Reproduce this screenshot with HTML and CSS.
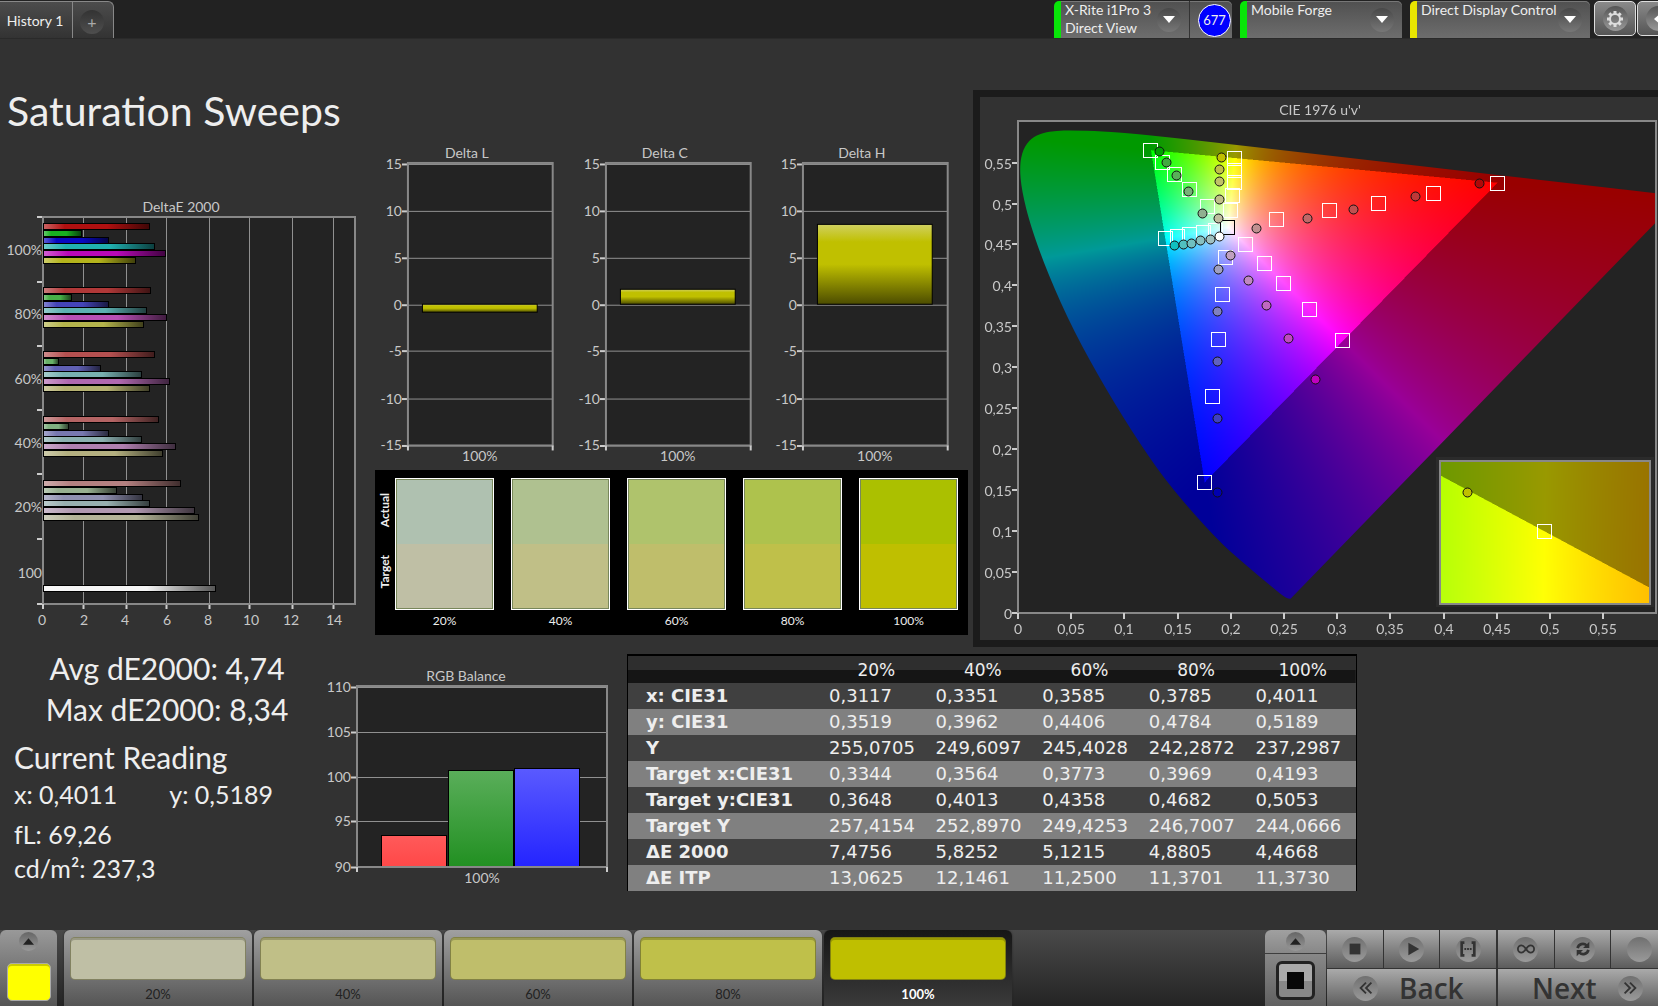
FILE: index.html
```html
<!DOCTYPE html>
<html lang="en">
<head>
<meta charset="utf-8">
<meta name="viewport" content="width=device-width, initial-scale=1">
<title>Saturation Sweeps</title>
<link rel="stylesheet" href="styles.css">
</head>
<body>
<header class="topbar">
  <nav class="tabs">
    <button class="tab" type="button">History 1</button>
    <button class="tab tab-add" type="button" aria-label="Add history"><span class="tab-plus">+</span></button>
  </nav>
  <div class="devices">
    <div class="device device-meter">
      <button class="device-main" type="button">
        <span class="device-name">X-Rite i1Pro 3<br>Direct View</span>
        <span class="knob"><svg viewBox="0 0 12 8"><path d="M0 0h12L6 7z"/></svg></span>
      </button>
      <div class="device-badge-cell"><span class="device-badge">677</span></div>
    </div>
    <div class="device device-source">
      <button class="device-main" type="button">
        <span class="device-name">Mobile Forge</span>
        <span class="knob"><svg viewBox="0 0 12 8"><path d="M0 0h12L6 7z"/></svg></span>
      </button>
    </div>
    <div class="device device-display">
      <button class="device-main" type="button">
        <span class="device-name">Direct Display Control</span>
        <span class="knob"><svg viewBox="0 0 12 8"><path d="M0 0h12L6 7z"/></svg></span>
      </button>
    </div>
    <button class="tool" type="button" aria-label="Settings">
      <span class="tool-disc"><svg viewBox="0 0 20 20"><circle cx="10" cy="10" r="5" fill="none" stroke="#ddd" stroke-width="2"/><g stroke="#ddd" stroke-width="3"><path d="M10 2v3M10 15v3M2 10h3M15 10h3M4.300 4.300l2.200 2.200M13.500 13.500l2.200 2.200M15.700 4.300l-2.200 2.200M6.500 13.500l-2.200 2.200"/></g></svg></span>
    </button>
    <button class="tool" type="button" aria-label="Collapse">
      <span class="tool-disc"><svg viewBox="0 0 20 20"><path d="M13 4v12L6 10z" fill="#fff"/></svg></span>
    </button>
  </div>
</header>

<main>
  <section class="upper">
    <div class="col-left">
      <h1>Saturation Sweeps</h1>
      <svg class="chart" id="deltaE" viewBox="0 195 375 440"></svg>
    </div>
    <div class="col-mid">
      <div class="deltas">
        <svg class="chart" id="deltaL" viewBox="0 140 198 331"></svg>
        <svg class="chart" id="deltaC" viewBox="0 140 198 331"></svg>
        <svg class="chart" id="deltaH" viewBox="0 140 198 331"></svg>
      </div>
      <div class="swatches">
        <div class="swatch-side"><span>Actual</span><span>Target</span></div>
        <div class="swatch-list">
          <figure><div class="pair"><i style="background:#afc1b0"></i><i style="background:#bfbfa5"></i></div><figcaption>20%</figcaption></figure>
          <figure><div class="pair"><i style="background:#afc190"></i><i style="background:#c0bf87"></i></div><figcaption>40%</figcaption></figure>
          <figure><div class="pair"><i style="background:#afc36c"></i><i style="background:#bfbe6b"></i></div><figcaption>60%</figcaption></figure>
          <figure><div class="pair"><i style="background:#aec24d"></i><i style="background:#bfc04a"></i></div><figcaption>80%</figcaption></figure>
          <figure><div class="pair"><i style="background:#abc000"></i><i style="background:#bfbf00"></i></div><figcaption>100%</figcaption></figure>
        </div>
      </div>
    </div>
    <div class="cie">
      <canvas id="cieField" width="1356" height="1086"></canvas>
      <svg class="chart" id="cieMarks" viewBox="980 97 678 543"></svg>
    </div>
  </section>

  <section class="lower">
    <div class="readings">
      <p class="stat">Avg dE2000: 4,74</p>
      <p class="stat">Max dE2000: 8,34</p>
      <h2>Current Reading</h2>
      <p class="value xy"><span>x: 0,4011</span><span>y: 0,5189</span></p>
      <p class="value">fL: 69,26</p>
      <p class="value">cd/m²: 237,3</p>
    </div>
    <svg class="chart" id="rgb" viewBox="325 665 302 230"></svg>
    <table>
      <colgroup><col class="c-label"><col><col><col><col><col></colgroup>
      <thead><tr><td></td><th scope="col">20%</th><th scope="col">40%</th><th scope="col">60%</th><th scope="col">80%</th><th scope="col">100%</th></tr></thead>
      <tbody>
        <tr><th scope="row">x: CIE31</th><td>0,3117</td><td>0,3351</td><td>0,3585</td><td>0,3785</td><td>0,4011</td></tr>
        <tr><th scope="row">y: CIE31</th><td>0,3519</td><td>0,3962</td><td>0,4406</td><td>0,4784</td><td>0,5189</td></tr>
        <tr><th scope="row">Y</th><td>255,0705</td><td>249,6097</td><td>245,4028</td><td>242,2872</td><td>237,2987</td></tr>
        <tr><th scope="row">Target x:CIE31</th><td>0,3344</td><td>0,3564</td><td>0,3773</td><td>0,3969</td><td>0,4193</td></tr>
        <tr><th scope="row">Target y:CIE31</th><td>0,3648</td><td>0,4013</td><td>0,4358</td><td>0,4682</td><td>0,5053</td></tr>
        <tr><th scope="row">Target Y</th><td>257,4154</td><td>252,8970</td><td>249,4253</td><td>246,7007</td><td>244,0666</td></tr>
        <tr><th scope="row">ΔE 2000</th><td>7,4756</td><td>5,8252</td><td>5,1215</td><td>4,8805</td><td>4,4668</td></tr>
        <tr><th scope="row">ΔE ITP</th><td>13,0625</td><td>12,1461</td><td>11,2500</td><td>11,3701</td><td>11,3730</td></tr>
      </tbody>
    </table>
  </section>
</main>

<footer class="bottombar">
  <button class="current" type="button" aria-label="Pattern colour">
    <span class="up-disc"><svg viewBox="0 0 10 8"><path d="M0 7h10L5 1z"/></svg></span>
    <span class="current-color"></span>
  </button>
  <div class="steps">
    <button class="step" type="button"><span class="step-color" style="background:#bfbfa5"></span>20%</button>
    <button class="step" type="button"><span class="step-color" style="background:#c0bf87"></span>40%</button>
    <button class="step" type="button"><span class="step-color" style="background:#bfbe6b"></span>60%</button>
    <button class="step" type="button"><span class="step-color" style="background:#bfc04a"></span>80%</button>
    <button class="step step-on" type="button"><span class="step-color" style="background:#bfbf00"></span>100%</button>
  </div>
  <div class="transport">
    <div class="mode">
      <button class="mode-up" type="button" aria-label="More modes"><span class="up-disc"><svg viewBox="0 0 10 8"><path d="M0 7h10L5 1z"/></svg></span></button>
      <button class="mode-now" type="button" aria-label="Window pattern"><span class="mode-frame"><i></i></span></button>
    </div>
    <div class="keys">
      <div class="keys-row">
        <button class="key" type="button" aria-label="Stop"><span class="disc"><svg viewBox="0 0 20 20"><path d="M4 4h12v12H4z" fill="#333"/></svg></span></button>
        <button class="key" type="button" aria-label="Play"><span class="disc"><svg viewBox="0 0 20 20"><path d="M6 3v14l12-7z" fill="#333"/></svg></span></button>
        <button class="key key-group-end" type="button" aria-label="Range"><span class="disc"><svg viewBox="0 0 20 20" fill="none" stroke="#333" stroke-width="3"><path d="M6 3H3v14h3M14 3h3v14h-3"/><path d="M6 10h8" stroke-width="2" stroke-dasharray="2 1"/></svg></span></button>
        <button class="key" type="button" aria-label="Continuous"><span class="disc"><svg viewBox="0 0 20 20" fill="none" stroke="#333" stroke-width="2"><path d="M10 10C8 7 6.500 6 5 6a4 4 0 0 0 0 8C6.500 14 8 13 10 10s3.500-4 5-4a4 4 0 0 1 0 8C13.500 14 12 13 10 10z"/></svg></span></button>
        <button class="key" type="button" aria-label="Repeat"><span class="disc"><svg viewBox="0 0 20 20"><path d="M4 9a6 6 0 0 1 10-3M16 11a6 6 0 0 1-10 3" fill="none" stroke="#333" stroke-width="3"/><path d="M17 2v7h-7zM3 18v-7h7z" fill="#333"/></svg></span></button>
        <button class="key" type="button" aria-label="Option"><span class="disc"></span></button>
      </div>
      <div class="keys-row">
        <button class="key key-wide key-group-end" type="button"><span class="disc"><svg viewBox="0 0 20 20" fill="none" stroke="#333" stroke-width="2"><path d="M10 4l-6 6 6 6M16 4l-6 6 6 6"/></svg></span>Back</button>
        <button class="key key-wide key-next" type="button">Next<span class="disc"><svg viewBox="0 0 20 20" fill="none" stroke="#333" stroke-width="2"><path d="M4 4l6 6-6 6M10 4l6 6-6 6"/></svg></span></button>
      </div>
    </div>
  </div>
</footer>
<script src="charts.js"></script>
</body>
</html>
```
FILE: styles.css
```css
* { box-sizing: border-box; }

body {
  margin: 0;
  min-height: 100vh;
  display: flex;
  flex-direction: column;
  overflow-x: hidden;
  background: #323232;
  color: #eee;
  font-family: Lato, "Open Sans", sans-serif;
}

button {
  margin: 0;
  padding: 0;
  border: 0;
  background: none;
  color: inherit;
  font: inherit;
}

h1, h2, p, figure { margin: 0; font-weight: 400; }

/* top bar */
.topbar {
  display: flex;
  justify-content: space-between;
  height: 39px;
  padding-top: 1px;
  background: #222;
  border-bottom: 1px solid #2a2a2a;
  overflow: hidden;
}

.tabs {
  display: flex;
  border: 1px solid #888;
  border-width: 1px 1px 0 0;
  border-radius: 0 6px 0 0;
  background: linear-gradient(#4c4c4c, #333);
}

.tab { width: 72px; padding-right: 2px; font-size: 14px; text-align: center; }
.tab-add { width: 41px; border-left: 1px solid #888; }

.tab-plus {
  display: block;
  width: 24px;
  margin: 4px auto 0;
  border-radius: 50%;
  background: linear-gradient(#333, #4e4e4e);
  color: #aaa;
  font-size: 16px;
  line-height: 24px;
}

.devices { display: flex; flex: none; margin-right: -22px; }

.device {
  display: flex;
  height: 38px;
  margin-right: 8px;
  border-radius: 5px 5px 0 0;
  border-left: 7px solid #08e508;
  background: linear-gradient(#505050, #6e6e6e);
  box-shadow: inset 0 1px #777;
}

.device-meter { width: 178px; }
.device-source { width: 162px; }
.device-display { width: 180px; border-left-color: #e8e500; margin-right: 4px; }

.device-main {
  display: flex;
  flex: 1;
  justify-content: space-between;
  padding: 0 8px 0 4px;
  text-align: left;
  font-size: 14px;
  line-height: 18px;
  white-space: nowrap;
}

.knob {
  display: flex;
  align-items: center;
  justify-content: center;
  width: 24px;
  height: 24px;
  margin-top: 7px;
  border-radius: 50%;
  background: linear-gradient(#484848, #777);
}

.knob svg { width: 12px; height: 8px; fill: #fff; }

.device-badge-cell {
  display: flex;
  align-items: center;
  justify-content: flex-end;
  width: 43px;
  padding-right: 1px;
  border-left: 1px solid #333;
}

.device-badge {
  width: 33px;
  border: 1px solid #fff;
  border-radius: 50%;
  background: #00f;
  font-size: 13px;
  line-height: 31px;
  text-align: center;
}

.tool {
  display: flex;
  align-items: center;
  justify-content: center;
  width: 42px;
  height: 35px;
  margin-right: 1px;
  border: 1px solid #ddd;
  border-radius: 5px;
  background: linear-gradient(#8a8a8a, #555);
}

.tool-disc {
  display: flex;
  align-items: center;
  justify-content: center;
  width: 25px;
  height: 25px;
  border-radius: 50%;
  background: linear-gradient(#555, #999);
}

.tool-disc svg { width: 20px; height: 20px; }

/* upper area */
main { flex: 1; }

.upper {
  display: grid;
  grid-template-columns: 375fr 593fr 690fr;
  align-items: start;
}

.chart { display: block; width: 100%; height: auto; }

h1 {
  padding: 48px 0 60px 7px;
  font-size: 41px;
  line-height: 48px;
}

.col-mid { padding-top: 101px; }
.deltas { display: grid; grid-template-columns: repeat(3, 1fr); }

.swatches {
  display: flex;
  padding: 8px 10px 6px 0;
  background: #000;
}

.swatch-side {
  display: flex;
  flex-direction: column;
  justify-content: space-around;
  align-items: center;
  flex: none;
  width: 20px;
  height: 132px;
  padding-bottom: 8px;
  font-size: 12px;
  font-weight: 700;
  line-height: 16px;
}

.swatch-side span { writing-mode: vertical-rl; transform: rotate(180deg); }

.swatch-list {
  display: grid;
  grid-template-columns: repeat(5, 1fr);
  flex: 1;
  gap: 17px;
}

.pair {
  display: flex;
  flex-direction: column;
  height: 132px;
  border: 1px solid #fff;
  outline: 1px solid #78875a;
  outline-offset: -2px;
}

.pair i { flex: 1; }
figcaption { font-size: 12px; line-height: 17px; padding-top: 2px; text-align: center; }

.cie {
  display: grid;
  margin: 51px 0 0 5px;
  border: 7px solid #1b1b1b;
  border-right: 0;
}

.cie canvas, .cie svg { grid-area: 1 / 1; width: 100%; height: auto; }

/* svg chart parts */
.chart text { fill: #c8c8c8; font-size: 14px; }
.plot { fill: #232323; }
.frame { fill: none; stroke: #888; stroke-width: 2; }
.tick { stroke: #ccc; stroke-width: 2; }
.bar { stroke: #000; stroke-width: 1; }
.target { fill: none; stroke: #fff; stroke-width: 1; }
.white-point { fill: none; stroke: #000; stroke-width: 1; }
.reading { stroke: #111; stroke-width: 1; }

/* lower area */
.lower {
  display: grid;
  grid-template-columns: 325fr 302fr 730fr 301fr;
  align-items: start;
  padding-top: 7px;
}

.lower > .chart { margin-top: 10px; }
.readings { padding-left: 14px; }
.stat { width: 306px; text-align: center; font-size: 30px; line-height: 41px; }
.stat:first-child { margin-top: -6px; }
.readings h2 { margin-top: 7px; font-size: 30px; line-height: 40px; }
.value { font-size: 25px; line-height: 34px; }
.xy { display: flex; gap: 52px; margin-bottom: 6px; }

table {
  width: 100%;
  table-layout: fixed;
  border-collapse: separate;
  border-spacing: 0;
  border: 1px solid #000;
  border-width: 2px 1px 0;
  font-family: "DejaVu Sans", sans-serif;
  font-size: 18px;
}

.c-label { width: 195px; }
thead tr { height: 27px; background: linear-gradient(#2e2e2e 50%, #151515 50%); }
td, th { padding: 0 0 0 6px; line-height: 24px; }
thead th { padding: 0; font-size: 17px; font-weight: 400; }
tbody tr { height: 26px; background: #404040; }
tbody tr:nth-child(even) { background: #808080; }
tbody th { padding-left: 18px; text-align: left; white-space: nowrap; }

/* bottom bar */
.bottombar {
  display: flex;
  height: 76px;
  background: linear-gradient(#4a4a4a, #242424);
  overflow: hidden;
}

.current {
  display: flex;
  flex-direction: column;
  align-items: center;
  flex: none;
  width: 57px;
  padding-top: 2px;
  border-radius: 6px 6px 0 0;
  background: linear-gradient(#999, #555);
}

.up-disc {
  display: flex;
  align-items: center;
  justify-content: center;
  width: 19px;
  height: 19px;
  border-radius: 50%;
  background: linear-gradient(#666, #999);
}

.up-disc svg { width: 11px; height: 9px; fill: #222; }

.current-color {
  width: 44px;
  height: 38px;
  margin-top: 12px;
  border: 1px solid #aaa;
  border-radius: 5px;
  background: #ff0;
  box-shadow: inset 0 2px #cc0;
}

.steps { display: flex; flex: none; gap: 2px; padding-left: 7px; }

.step {
  display: flex;
  flex-direction: column;
  align-items: center;
  width: 188px;
  padding-top: 7px;
  border-radius: 6px 6px 0 0;
  background: linear-gradient(#a0a0a0, #555);
  box-shadow: 0 0 2px #222;
  color: #222;
  font-size: 13px;
  line-height: 24px;
}

.step-color {
  width: 176px;
  height: 45px;
  margin-bottom: 2px;
  border: 1px solid rgba(70, 70, 30, .5);
  border-radius: 5px;
  box-shadow: inset 0 2px rgba(0, 0, 0, .2);
}

.step-on { background: linear-gradient(#161616, #3a3a3a); color: #fff; font-weight: 700; }

.transport { display: flex; flex: none; margin-left: auto; }

.mode { display: flex; flex-direction: column; width: 61px; margin-right: 1px; }

.mode-up {
  display: flex;
  justify-content: center;
  height: 23px;
  padding-top: 2px;
  border-radius: 6px 6px 0 0;
  background: linear-gradient(#a0a0a0, #888);
}

.mode-now {
  display: flex;
  align-items: center;
  justify-content: center;
  flex: 1;
  margin-top: 1px;
  background: linear-gradient(#888, #606060);
}

.mode-frame {
  display: flex;
  align-items: center;
  justify-content: center;
  width: 39px;
  height: 39px;
  border: 3px solid #222;
  border-radius: 6px;
  background: linear-gradient(#aaa 50%, #888 50%);
}

.mode-frame i { width: 17px; height: 17px; background: #080808; }

.keys { display: flex; flex-direction: column; gap: 1px; width: 331px; overflow: hidden; background: #333; }
.keys-row { display: flex; gap: 1px; flex: none; width: 340px; height: 38px; }

.key {
  display: flex;
  align-items: center;
  justify-content: center;
  flex: 1;
  background: linear-gradient(#aaa, #5c5c5c);
  color: #333;
}

.key-group-end { margin-right: 1px; }

.disc {
  display: flex;
  align-items: center;
  justify-content: center;
  flex: none;
  width: 25px;
  height: 25px;
  border-radius: 50%;
  background: linear-gradient(#707070, #9a9a9a);
}

.disc svg { width: 18px; height: 18px; }

.key-wide {
  flex: none;
  width: 169px;
  justify-content: flex-start;
  gap: 21px;
  padding-left: 26px;
  font: 600 28px/38px "Open Sans", sans-serif;
}

.key-next { padding-left: 34px; }
```
FILE: charts.js
```js
const NS = 'http://www.w3.org/2000/svg';

function add(parent, tag, attrs, text) {
  const el = document.createElementNS(NS, tag);
  for (const k in attrs) el.setAttribute(k, attrs[k]);
  if (text !== undefined) el.textContent = text;
  parent.appendChild(el);
  return el;
}
const line = (p, cls, x1, y1, x2, y2) => add(p, 'line', { class: cls, x1, y1, x2, y2 });
const label = (p, anchor, x, y, t) => add(p, 'text', { 'text-anchor': anchor, x, y }, t);

let gradientCount = 0;
function gradient(svg, horizontal, stops) {
  const id = 'g' + (++gradientCount);
  const g = add(svg, 'linearGradient', { id, x1: 0, y1: 0, x2: horizontal ? 1 : 0, y2: horizontal ? 0 : 1 });
  stops.forEach(([offset, color]) => add(g, 'stop', { offset, 'stop-color': color }));
  return `url(#${id})`;
}
function mix(hex, other, t) {
  const a = parseInt(hex.slice(1), 16);
  return 'rgb(' + [16, 8, 0].map(s => Math.round(((a >> s) & 255) * (1 - t) + other * t)).join() + ')';
}

/* DeltaE 2000 */
(function () {
  const s = document.getElementById('deltaE');
  label(s, 'middle', 181, 212, 'DeltaE 2000');
  add(s, 'rect', { class: 'plot', x: 43, y: 217, width: 312, height: 387 });
  [83, 126, 166, 209, 249, 292, 333].forEach(x => {
    add(s, 'rect', { x, y: 217, width: 1, height: 387, fill: '#909090' });
    line(s, 'tick', x + .5, 604, x + .5, 609);
  });
  add(s, 'rect', { class: 'frame', x: 43, y: 217, width: 312, height: 387 });
  line(s, 'tick', 43, 604, 43, 609);
  [217, 282, 346, 410, 474, 539, 604].forEach(y => line(s, 'tick', 37, y, 42, y));
  const groups = [
    [226, ['#b01010', '#18b020', '#0808c0', '#20b0b0', '#b808b8', '#b4b41c'], [150, 82, 109, 155, 166, 136]],
    [290, ['#b03838', '#48b048', '#4444b8', '#5cb0b0', '#b850b4', '#b4b44c'], [151, 72, 109, 147, 167, 144]],
    [354, ['#b45050', '#68b068', '#6060b4', '#78b0b0', '#b068b0', '#b4b070'], [155, 59, 101, 142, 170, 150]],
    [419, ['#b46464', '#80b080', '#7878b0', '#8cb0b0', '#b080b0', '#b4b080'], [159, 69, 109, 142, 176, 163]],
    [483, ['#b48080', '#98b090', '#9090b0', '#98b0b0', '#b098b0', '#b4b498'], [181, 117, 143, 150, 195, 199]]
  ];
  const bar = (y, color, end) => add(s, 'rect', {
    class: 'bar', x: 43.5, y: y - 2.5, width: end - 44, height: 6,
    fill: gradient(s, true, [[0, mix(color, 255, .35)], [.2, color], [.6, color], [1, mix(color, 0, .65)]])
  });
  groups.forEach(([y, colors, ends]) => colors.forEach((c, i) => bar(y + Math.round(i * 6.8), c, ends[i])));
  bar(588, '#f4f4f4', 216);
  ['100%', '80%', '60%', '40%', '20%', '100'].forEach((t, i) => label(s, 'end', 42, [255, 319, 384, 448, 512, 578][i], t));
  [42, 84, 125, 167, 208, 251, 291, 334].forEach((x, i) => label(s, 'middle', x, 625, i * 2));
})();

/* Delta L / C / H */
function deltaChart(id, title, top, bottom) {
  const s = document.getElementById(id);
  label(s, 'middle', 92, 158, title);
  add(s, 'rect', { class: 'plot', x: 33, y: 163, width: 145, height: 283 });
  [164, 211, 258, 305, 351, 399, 446].forEach((y, i) => {
    add(s, 'rect', { x: 33, y, width: 145, height: 1, fill: '#909090' });
    line(s, 'tick', 27, y + .5, 32, y + .5);
    label(s, 'end', 27, y + 5, 15 - i * 5);
  });
  add(s, 'rect', { class: 'frame', x: 33, y: 163, width: 145, height: 283 });
  [33, 178].forEach(x => line(s, 'tick', x, 446, x, 451));
  add(s, 'rect', {
    class: 'bar', x: 47.5, y: top + .5, width: 115, height: bottom - top,
    fill: gradient(s, false, [[0, '#d0d060'], [.22, '#c0c000'], [.5, '#c0c000'], [1, '#4c4c00']])
  });
  label(s, 'middle', 105, 462, '100%');
}
deltaChart('deltaL', 'Delta L', 304, 312);
deltaChart('deltaC', 'Delta C', 289, 304);
deltaChart('deltaH', 'Delta H', 224, 304);

/* RGB balance */
(function () {
  const s = document.getElementById('rgb');
  label(s, 'middle', 466, 682, 'RGB Balance');
  add(s, 'rect', { class: 'plot', x: 357, y: 687, width: 250, height: 181 });
  [688, 733, 778, 822, 868].forEach((y, i) => {
    add(s, 'rect', { x: 357, y, width: 250, height: 1, fill: '#909090' });
    line(s, 'tick', 351, y + .5, 356, y + .5);
    label(s, 'end', 351, y + 5, 110 - i * 5);
  });
  const bars = [[381, 836, '#ff5a5a', '#ff4848'], [448, 771, '#5aae5a', '#229022'], [514, 769, '#5a5aff', '#2424ff']];
  bars.forEach(([x, y, a, b]) => add(s, 'rect', {
    class: 'bar', x: x + .5, y: y + .5, width: 65, height: 867 - y, fill: gradient(s, false, [[0, a], [1, b]])
  }));
  add(s, 'rect', { class: 'frame', x: 357, y: 687, width: 250, height: 181 });
  [357, 607].forEach(x => line(s, 'tick', x, 868, x, 873));
  label(s, 'middle', 482, 884, '100%');
})();

/* CIE 1976 colour field */
const U0 = 1018, V0 = 612, SU = 1064, SV = 821;
function paintField(x0, y0, w, h, toUV, scale) {
  const layer = document.createElement('canvas');
  const W = layer.width = Math.round(w * scale), H = layer.height = Math.round(h * scale);
  const ctx = layer.getContext('2d');
  const img = ctx.createImageData(W, H);
  for (let j = 0; j < H; j++) {
    for (let i = 0; i < W; i++) {
      const [u, v] = toUV(x0 + (i + .5) / scale, y0 + (j + .5) / scale);
      if (v <= 0.002) continue;
      const X = 9 * u / (4 * v), Z = (12 - 3 * u - 20 * v) / (4 * v);
      const lin = [
        3.2406 * X - 1.5372 - 0.4986 * Z,
        -0.9689 * X + 1.8758 + 0.0415 * Z,
        0.0557 * X - 0.2040 + 1.0570 * Z
      ];
      const level = Math.min(...lin) >= 0 ? 255 : 153;
      const max = Math.max(...lin), k = (j * W + i) * 4;
      for (let c = 0; c < 3; c++) img.data[k + c] = Math.max(0, lin[c]) / max * level;
      img.data[k + 3] = 255;
    }
  }
  ctx.putImageData(img, 0, 0);
  return layer;
}
(function () {
  const locus = [[.1741, .0050], [.1733, .0048], [.1714, .0051], [.1689, .0069], [.1644, .0109], [.1566, .0177],
    [.1440, .0297], [.1241, .0578], [.1096, .0868], [.0913, .1327], [.0687, .2007], [.0454, .2950], [.0235, .4127],
    [.0082, .5384], [.0039, .6548], [.0139, .7502], [.0389, .8120], [.0743, .8338], [.1142, .8262], [.1547, .8059],
    [.2296, .7543], [.3016, .6923], [.3731, .6245], [.4441, .5547], [.5125, .4866], [.5752, .4242], [.6270, .3725],
    [.6658, .3340], [.6915, .3083], [.7190, .2809], [.7347, .2653]];
  const ctx = document.getElementById('cieField').getContext('2d');
  ctx.scale(2, 2);
  ctx.translate(-980, -97);
  ctx.fillStyle = '#232323';
  ctx.fillRect(1018, 121, 639, 492);

  const main = paintField(1018, 121, 639, 492, (x, y) => [(x - U0) / SU, (V0 - y) / SV], 2);
  ctx.save();
  ctx.beginPath();
  ctx.rect(1018, 121, 639, 492);
  ctx.clip();
  const pts = locus.map(([x, y]) => {
    const d = -2 * x + 12 * y + 3;
    return [U0 + SU * 4 * x / d, V0 - SV * 9 * y / d];
  });
  const n = pts.length;
  const mid = (a, b) => [(a[0] + b[0]) / 2, (a[1] + b[1]) / 2];
  ctx.beginPath();
  ctx.moveTo(...pts[n - 1]);
  ctx.lineTo(...mid(pts[0], pts[1]));
  for (let i = 1; i < n - 1; i++) ctx.quadraticCurveTo(...pts[i], ...mid(pts[i], pts[i + 1]));
  ctx.lineTo(...pts[n - 1]);
  ctx.closePath();
  ctx.clip();
  ctx.drawImage(main, 1018, 121, 639, 492);
  ctx.restore();

  ctx.fillStyle = '#2b2b2b';
  ctx.fillRect(1436, 457, 218, 150);
  const inset = paintField(1440, 461, 210, 143,
    (x, y) => [.2039 + (x - 1544.5) / 5700, .5529 - (y - 531.5) / 25140], 2);
  ctx.drawImage(inset, 1440, 461, 210, 143);
})();

/* CIE axes and markers */
(function () {
  const s = document.getElementById('cieMarks');
  label(s, 'middle', 1320, 115, "CIE 1976 u'v'");
  add(s, 'rect', { class: 'frame', x: 1018, y: 121, width: 638, height: 492 });
  add(s, 'rect', { class: 'frame', x: 1440, y: 461, width: 210, height: 143 });
  for (let i = 0; i < 12; i++) {
    const t = String(i * 5 / 100).replace('.', ',');
    const x = Math.round(U0 + SU * i * .05), y = Math.round(612.5 - 818 * i * .05);
    line(s, 'tick', x, 613, x, 619);
    line(s, 'tick', 1012, y, 1017, y);
    label(s, 'middle', x, 634, t);
    label(s, 'end', 1012, y + 6, t);
  }
  const square = (x, y, cls) => add(s, 'rect', { class: cls, x: x - 6.5, y: y - 6.5, width: 14, height: 14 });
  [[1150, 150], [1162, 162], [1174, 174], [1189, 189], [1207, 206],
   [1234, 158], [1234, 170], [1234, 182], [1232, 195], [1230, 210],
   [1165, 238], [1177, 236], [1189, 234], [1203, 232], [1215, 230],
   [1245, 244], [1264, 263], [1283, 283], [1309, 309], [1342, 340],
   [1225, 257], [1222, 294], [1218, 339], [1212, 396], [1204, 482],
   [1276, 219], [1329, 210], [1378, 203], [1433, 193], [1497, 183], [1544, 531]
  ].forEach(([x, y]) => square(x, y, 'target'));
  square(1227, 227, 'white-point');
  [[1159, 151, '#00a000'], [1166, 162, '#40a840'], [1176, 175, '#58b058'], [1188, 191, '#78b078'], [1202, 213, '#90b090'],
   [1221, 157, '#c0c000'], [1219, 169, '#c0c048'], [1219, 181, '#c0c068'], [1219, 199, '#c0c088'], [1218, 218, '#c0c0a0'],
   [1174, 245, '#10c0c0'], [1183, 244, '#50c0c0'], [1191, 243, '#70c0c0'], [1200, 240, '#88c0c0'], [1210, 239, '#a0c0c0'],
   [1230, 255, '#c0a0c0'], [1248, 280, '#c088c0'], [1266, 305, '#c068c0'], [1288, 338, '#c048c0'], [1315, 379, '#c000c0'],
   [1218, 269, '#a0a0c0'], [1217, 311, '#8080c0'], [1217, 361, '#6060c0'], [1217, 418, '#4040c0'], [1217, 492, '#0000b0'],
   [1256, 228, '#c09090'], [1307, 218, '#c06868'], [1353, 209, '#c05050'], [1415, 196, '#c03838'], [1479, 183, '#b00808'],
   [1219, 236, '#ffffff'], [1467, 492, '#c0c000']
  ].forEach(([x, y, c]) => add(s, 'circle', { class: 'reading', cx: x + .5, cy: y + .5, r: 4.5, fill: c }));
})();
```
